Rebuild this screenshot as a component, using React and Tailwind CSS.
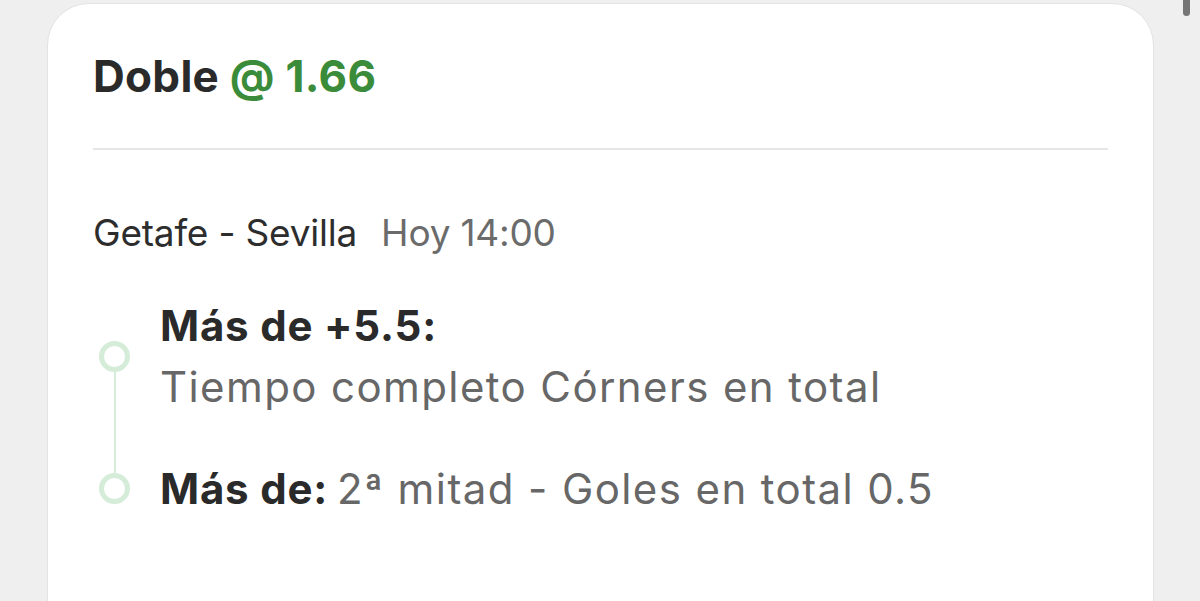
import React from 'react';

// Timeline leg: circle with connector above and/or below
const Dot = ({ lead, top, bottom }) => (
  <div className="flex flex-col items-center w-[31px] shrink-0 self-stretch">
    {lead && <div className="h-[41px] w-[2px] bg-[#d7eddc]" />}
    <div className={`flex-1 w-[2px] ${top ? 'bg-[#d7eddc]' : 'bg-transparent'}`} />
    <div className="w-[31px] h-[31px] rounded-full border-[5px] border-[#d5ecd9] bg-white" />
    <div className={`flex-1 w-[2px] ${bottom ? 'bg-[#d7eddc]' : 'bg-transparent'}`} />
  </div>
);

const legs = [
  { label: 'Más de +5.5:', detail: 'Tiempo completo Córners en total', stacked: true },
  { label: 'Más de:', detail: '2ª mitad - Goles en total 0.5', stacked: false },
];

export default function App() {
  return (
    <div
      className="relative w-full h-[601px] overflow-hidden bg-[#efefef] pl-[47px] pr-[46px] pt-[3px]"
      style={{ fontFamily: 'Inter, "Noto Sans", sans-serif' }}
    >
      {/* Scrollbar thumb */}
      <div className="absolute right-[10px] -top-[4px] w-[7px] h-[20px] rounded-full bg-[#767676]" />

      {/* Bet card */}
      <div className="bg-white border border-[#e3e3e3] rounded-[42px] h-[640px] pl-[45px] pr-[45px] pt-[44px]">
        <h2 className="text-[44px] leading-[56px] font-bold text-[#2a2a2a] tracking-[0.3px]">
          Doble <span className="text-[#3a8b3a]">@ 1.66</span>
        </h2>

        <div className="mt-[44px] h-[2px] bg-[#e6e6e6]" />

        <div className="mt-[63px] flex items-center text-[37px] leading-[40px] tracking-[-0.2px]">
          <span className="text-[#2d2d2d]">Getafe - Sevilla</span>
          <span className="ml-[24px] text-[#6b6b6b]">Hoy 14:00</span>
        </div>

        <div className="mt-[42px] pl-[6px] flex flex-col">
          {legs.map((leg, i) => (
            <div key={i} className="flex gap-[30px]">
              <Dot lead={i > 0} top={i > 0} bottom={i < legs.length - 1} />
              {leg.stacked ? (
                <div className="flex flex-col text-[42px] leading-[61px]">
                  <span className="font-bold text-[#2a2a2a] tracking-[0.8px]">{leg.label}</span>
                  <span className="text-[#676767] tracking-[1.4px]">{leg.detail}</span>
                </div>
              ) : (
                <div className="pt-[41px] flex items-baseline text-[42px] leading-[61px]">
                  <span className="font-bold text-[#2a2a2a] tracking-[0.8px]">{leg.label}</span>
                  <span className="ml-[9px] text-[#676767] tracking-[1.4px]">{leg.detail}</span>
                </div>
              )}
            </div>
          ))}
        </div>
      </div>
    </div>
  );
}
